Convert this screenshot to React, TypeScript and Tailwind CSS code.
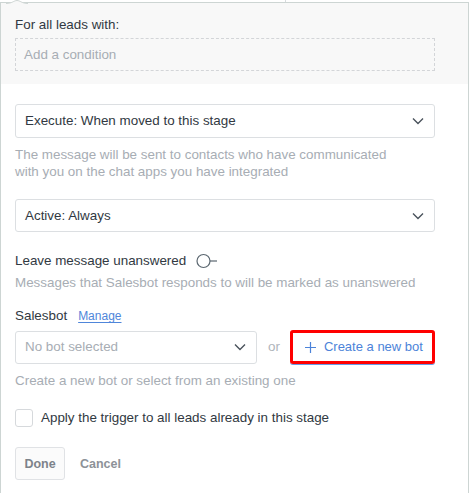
import React from 'react';

const Chevron = () => (
  <svg width="12" height="8" viewBox="0 0 12 8" fill="none" className="shrink-0">
    <path d="M1 1.5 L6 6.5 L11 1.5" stroke="#4a535c" strokeWidth="1.4" />
  </svg>
);

const Select = ({ label, placeholder = false, className = '' }: { label: string; placeholder?: boolean; className?: string }) => (
  <div className={`flex items-center justify-between rounded-[3px] border border-[#dcdfe2] bg-white pl-[9px] pr-[10px] ${className}`}>
    <span className={placeholder ? 'text-[#a7adb4]' : 'text-[#313942]'}>{label}</span>
    <Chevron />
  </div>
);

export default function App() {
  return (
    <div className="relative w-[469px] h-[493px] overflow-hidden bg-white text-[13.4px] leading-[18px] text-[#313942]" style={{ fontFamily: '"Liberation Sans", Arial, sans-serif' }}>
      {/* neighbouring tick above the frame */}
      <div className="absolute left-[285px] top-0 h-[2px] w-px bg-[#d7dbde]" />
      {/* arrow notch */}
      <svg className="absolute left-[6px] top-0" width="22" height="4" viewBox="0 0 22 4">
        <path d="M0 3.5 C6 3.5 8 0.5 11 0.5 C14 0.5 16 3.5 22 3.5" fill="#f8f8f8" stroke="#cfd6d4" strokeWidth="1" />
      </svg>

      <div className="mt-[2px] h-[491px] border-l border-r border-t border-[#cdd5d3] w-[469px]">
        <div className="bg-[#f8f8f8] px-[14px] pt-[13px] pb-[13px]">
          <div>For all leads with:</div>
          <div className="mt-[4px] flex h-[33px] w-[420px] items-center border border-dashed border-[#d3d5d8] pl-[8px] text-[#a7adb4]">
            Add a condition
          </div>
        </div>

        <div className="px-[14px]">
          <Select label="Execute: When moved to this stage" className="mt-[20px] h-[34px] w-[420px]" />
          <p className="mt-[8px] leading-[17px] text-[#a7adb4]">
            The message will be sent to contacts who have communicated
            <br />
            with you on the chat apps you have integrated
          </p>
          <Select label="Active: Always" className="mt-[19px] h-[33px] w-[420px]" />

          <div className="mt-[20px] flex items-center">
            <span>Leave message unanswered</span>
            <svg className="ml-[10px]" width="24" height="16" viewBox="0 0 24 16" fill="none">
              <circle cx="7.5" cy="8" r="6.5" stroke="#5b6770" strokeWidth="1.2" />
              <path d="M14 8 H21" stroke="#5b6770" strokeWidth="1.2" />
            </svg>
          </div>
          <div className="mt-[4px] text-[#a7adb4]">Messages that Salesbot responds to will be marked as unanswered</div>

          <div className="mt-[15px] flex items-center">
            <span>Salesbot</span>
            <a className="ml-[11px] text-[12px] text-[#4f86da] underline underline-offset-2">Manage</a>
          </div>

          <div className="mt-[5px] flex items-center">
            <Select label="No bot selected" placeholder className="h-[33px] w-[242px]" />
            <span className="ml-[11px] text-[#b0b5bb]">or</span>
            <button className="ml-[10px] flex h-[34px] w-[145px] items-center rounded-[3px] border-[3px] border-[#ff0000] pl-[11px] text-[13px] text-[#4c83d9] shadow-[0_1px_0_#6a9be6]">
              <svg width="13" height="13" viewBox="0 0 13 13" className="mr-[7px]">
                <path d="M6.5 1 V12 M1 6.5 H12" stroke="#4c83d9" strokeWidth="1.2" />
              </svg>
              Create a new bot
            </button>
          </div>
          <div className="mt-[8px] text-[#a7adb4]">Create a new bot or select from an existing one</div>

          <div className="mt-[19px] flex items-center">
            <span className="h-[18px] w-[18px] rounded-[3px] border border-[#d6d9dc] bg-white" />
            <span className="ml-[8px]">Apply the trigger to all leads already in this stage</span>
          </div>

          <div className="mt-[20px] flex items-center">
            <button className="h-[33px] w-[50px] rounded-[3px] border border-[#e0e2e5] bg-[#fbfbfb] text-[12.5px] font-bold text-[#7d838a]">
              Done
            </button>
            <button className="ml-[15px] text-[12.5px] font-bold text-[#8d9298]">Cancel</button>
          </div>
        </div>
      </div>
    </div>
  );
}
